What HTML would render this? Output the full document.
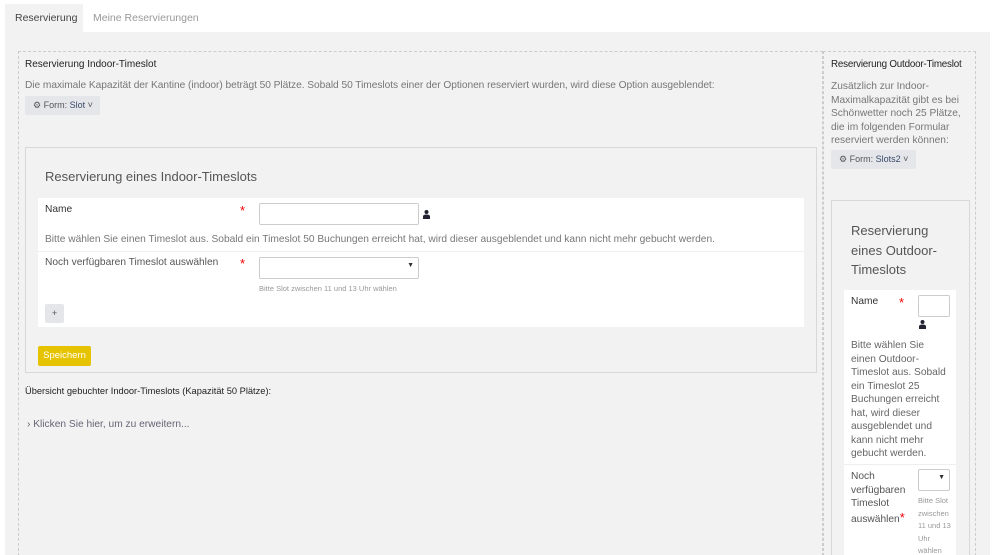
<!DOCTYPE html>
<html><head><meta charset="utf-8"><style>
*{box-sizing:border-box;margin:0;padding:0}
html,body{width:999px;height:555px;overflow:hidden}
body{background:#fff;font-family:"Liberation Sans",sans-serif;color:#333;position:relative}
.a{position:absolute}
.t{font-size:10.5px;white-space:nowrap}
.g{color:#777}
.star{color:#e00;font-size:13px}
.inp{background:#fff;border:1px solid #ccc;border-radius:2px}
.btn{background:#e4e6ea;border-radius:2px;font-size:9px;color:#555}
.btn b{color:#3a4a6a;font-weight:normal}
</style></head><body>
<div class="a" style="left:5px;top:4px;width:78px;height:30px;background:#f2f2f2"></div>
<div class="a t" style="left:15px;top:12px;color:#444">Reservierung</div>
<div class="a t g" style="left:93px;top:12px;color:#999">Meine Reservierungen</div>
<div class="a" style="left:5px;top:32px;width:985px;height:523px;background:#f2f2f2"></div>
<div class="a" style="left:18px;top:51px;width:805px;height:510px;border:1px dashed #ccc"></div>
<div class="a" style="left:823px;top:51px;width:153px;height:510px;border:1px dashed #ccc"></div>

<div class="a t" style="left:25px;top:59px;font-size:10px;color:#222">Reservierung Indoor-Timeslot</div>
<div class="a t g" style="left:25px;top:80px;font-size:10.2px;letter-spacing:-0.05px">Die maximale Kapazität der Kantine (indoor) beträgt 50 Plätze. Sobald 50 Timeslots einer der Optionen reserviert wurden, wird diese Option ausgeblendet:</div>
<div class="a btn" style="left:25px;top:96px;width:75px;height:19px;padding:4px 0 0 8px">⚙ Form: <b>Slot</b> ˅</div>

<div class="a" style="left:25px;top:147px;width:792px;height:226px;border:1px solid #d8d8d8;background:#f2f2f2"></div>
<div class="a t" style="left:45px;top:169px;font-size:13px;color:#555">Reservierung eines Indoor-Timeslots</div>
<div class="a" style="left:38px;top:198px;width:766px;height:129px;background:#fff"></div>
<div class="a" style="left:38px;top:251px;width:766px;height:1px;background:#eee"></div>
<div class="a t" style="left:45px;top:204px;font-size:10.2px">Name</div>
<div class="a star" style="left:240px;top:203px">*</div>
<div class="a inp" style="left:259px;top:203px;width:160px;height:22px"></div>
<svg class="a" style="left:423px;top:210px" width="7" height="9" viewBox="0 0 7 9"><circle cx="3.5" cy="2" r="2" fill="#223"/><path d="M0 9V6.5Q0 4.5 3.5 4.5T7 6.5V9Z" fill="#223"/></svg>
<div class="a t g" style="left:45px;top:234px;font-size:10.2px">Bitte wählen Sie einen Timeslot aus. Sobald ein Timeslot 50 Buchungen erreicht hat, wird dieser ausgeblendet und kann nicht mehr gebucht werden.</div>
<div class="a t g" style="left:45px;top:257px;font-size:10.2px;color:#555">Noch verfügbaren Timeslot auswählen</div>
<div class="a star" style="left:240px;top:256px">*</div>
<div class="a inp" style="left:259px;top:257px;width:160px;height:22px"><span class="a" style="right:4px;top:4px;font-size:7px">▼</span></div>
<div class="a t" style="left:259px;top:284px;font-size:7.5px;color:#999">Bitte Slot zwischen 11 und 13 Uhr wählen</div>
<div class="a btn" style="left:45px;top:304px;width:19px;height:19px;text-align:center;line-height:18px">+</div>
<div class="a" style="left:38px;top:346px;width:53px;height:20px;background:#e5c300;border-radius:2px;color:#fff;font-size:9.5px;text-align:center;line-height:20px">Speichern</div>
<div class="a t" style="left:25px;top:386px;font-size:9.3px;color:#222">Übersicht gebuchter Indoor-Timeslots (Kapazität 50 Plätze):</div>
<div class="a t" style="left:27px;top:419px;font-size:10.2px;color:#667">› Klicken Sie hier, um zu erweitern...</div>

<div class="a t" style="left:831px;top:59px;font-size:9.8px;color:#222;letter-spacing:-0.2px">Reservierung Outdoor-Timeslot</div>
<div class="a g" style="left:831px;top:80px;width:140px;font-size:10.2px;line-height:13.5px">Zusätzlich zur Indoor-Maximalkapazität gibt es bei Schönwetter noch 25 Plätze, die im folgenden Formular reserviert werden können:</div>
<div class="a btn" style="left:831px;top:150px;width:85px;height:19px;padding:4px 0 0 8px">⚙ Form: <b>Slots2</b> ˅</div>
<div class="a" style="left:831px;top:200px;width:139px;height:370px;border:1px solid #d8d8d8;background:#f2f2f2"></div>
<div class="a" style="left:851px;top:221px;font-size:13px;line-height:19.5px;color:#555;width:100px">Reservierung eines Outdoor-Timeslots</div>
<div class="a" style="left:844px;top:290px;width:112px;height:270px;background:#fff"></div>
<div class="a" style="left:844px;top:464px;width:112px;height:1px;background:#eee"></div>
<div class="a t" style="left:851px;top:296px;font-size:10.2px">Name</div>
<div class="a star" style="left:899px;top:295px">*</div>
<div class="a inp" style="left:918px;top:295px;width:32px;height:22px"></div>
<svg class="a" style="left:919px;top:320px" width="7" height="9" viewBox="0 0 7 9"><circle cx="3.5" cy="2" r="2" fill="#223"/><path d="M0 9V6.5Q0 4.5 3.5 4.5T7 6.5V9Z" fill="#223"/></svg>
<div class="a g" style="left:851px;top:339px;width:100px;font-size:10.2px;line-height:13.5px;color:#666">Bitte wählen Sie einen Outdoor-Timeslot aus. Sobald ein Timeslot 25 Buchungen erreicht hat, wird dieser ausgeblendet und kann nicht mehr gebucht werden.</div>
<div class="a" style="left:851px;top:470px;width:62px;font-size:10.2px;line-height:13.5px;color:#555">Noch verfügbaren Timeslot auswählen<span class="star">*</span></div>
<div class="a inp" style="left:918px;top:469px;width:32px;height:22px"><span class="a" style="right:4px;top:4px;font-size:7px">▼</span></div>
<div class="a" style="left:918px;top:495px;width:34px;font-size:7.5px;line-height:12.5px;color:#999">Bitte Slot zwischen 11 und 13 Uhr wählen</div>
</body></html>
